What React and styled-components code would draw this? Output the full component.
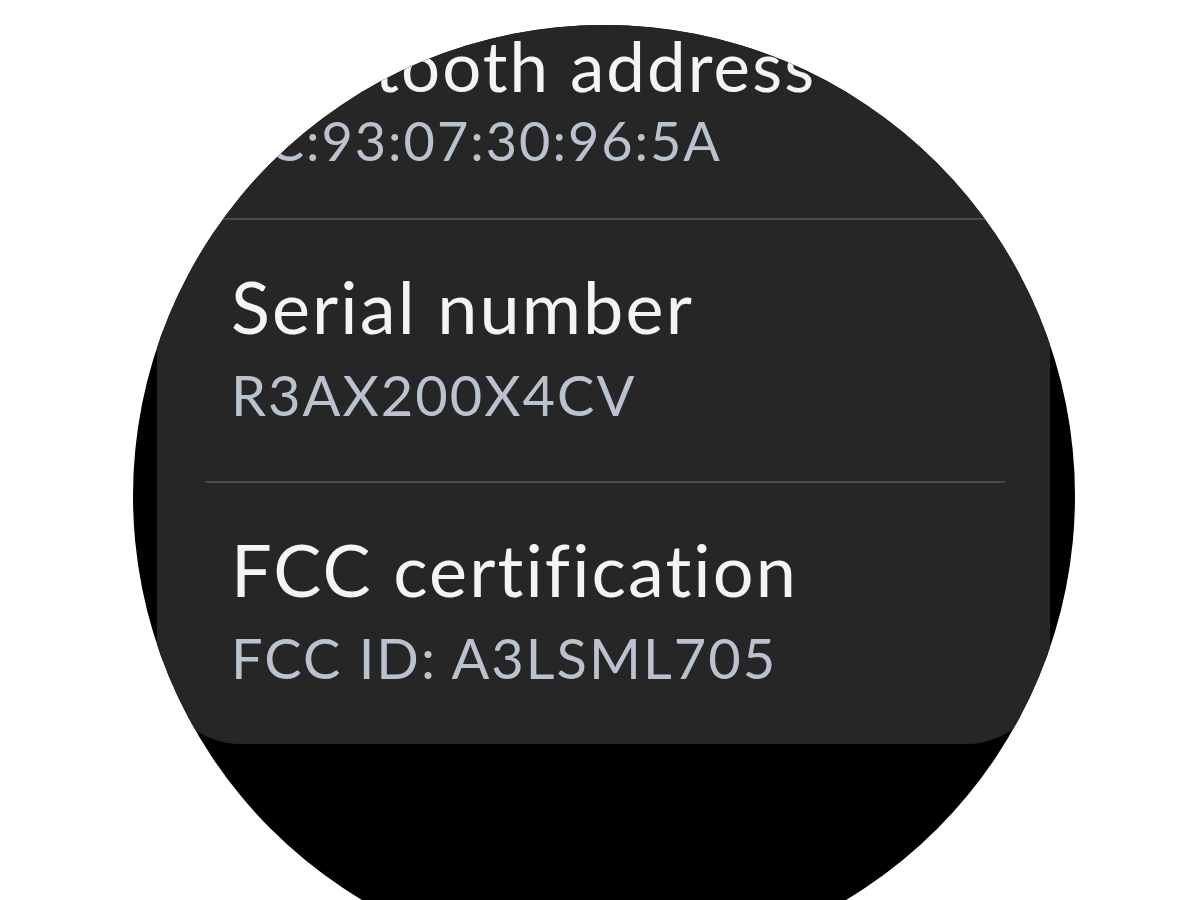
import React from 'react'
import styled, { createGlobalStyle } from 'styled-components'

const GlobalStyle = createGlobalStyle`
    html, body {
        margin: 0;
        padding: 0;
        background: #ffffff;
    }
    body {
        font-family: Lato, "Open Sans", sans-serif;
        font-variant-ligatures: none;
    }
`

const Stage = styled.main`
    width: 1200px;
    height: 900px;
    overflow: hidden;
    padding: 25px 0 0 133px;
    box-sizing: border-box;
`

const Watch = styled.div`
    width: 942px;
    height: 942px;
    border-radius: 50%;
    background: #000000;
    overflow: hidden;
`

const Card = styled.section`
    margin-left: 24px;
    width: 893px;
    background: #262626;
    border-radius: 0 0 84px 84px;
    display: flex;
    flex-direction: column;
`

// the top row sits under the curved glass edge, so it reads a bit smaller
const Item = styled.div`
    display: flex;
    flex-direction: column;
    gap: ${p => (p.$first ? '14px' : '25px')};
    padding: ${p => (p.$first ? '6px 0 50px' : '50px 0 58px')};
    padding-left: 74px;
`

const Title = styled.div`
    color: #f4f4f4;
    font-size: ${p => (p.$small ? '69px' : '72px')};
    line-height: 1;
    font-weight: 400;
    letter-spacing: 2.1px;
    white-space: nowrap;
`

const Value = styled.div`
    color: #b9c2ce;
    font-size: ${p => (p.$small ? '54px' : '56px')};
    line-height: 1;
    font-weight: 400;
    letter-spacing: 2px;
    white-space: nowrap;
`

const Divider = styled.hr`
    margin: 0 45px 0 48px;
    border: none;
    height: 2px;
    background: #4b4b4b;
`

const rows = [
    { title: 'Bluetooth address', value: 'BC:93:07:30:96:5A' },
    { title: 'Serial number', value: 'R3AX200X4CV' },
    { title: 'FCC certification', value: 'FCC ID: A3LSML705' },
]

export default function App() {
    return (
        <Stage>
            <GlobalStyle />
            <Watch>
                <Card>
                    {rows.map((row, i) => (
                        <React.Fragment key={row.title}>
                            {i > 0 && <Divider />}
                            <Item $first={i === 0}>
                                <Title $small={i === 0}>{row.title}</Title>
                                <Value $small={i === 0}>{row.value}</Value>
                            </Item>
                        </React.Fragment>
                    ))}
                </Card>
            </Watch>
        </Stage>
    )
}
